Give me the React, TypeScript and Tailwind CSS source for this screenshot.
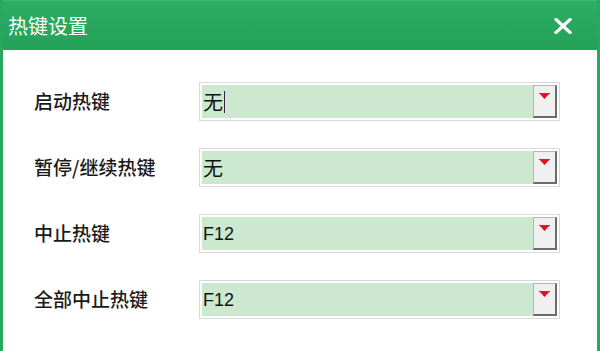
import React from "react";

const rows = [
  { label: "启动热键", value: "无", caret: true },
  { label: "暂停/继续热键", value: "无" },
  { label: "中止热键", value: "F12" },
  { label: "全部中止热键", value: "F12" },
];

function HotkeySelect({ value, caret }: { value: string; caret?: boolean }) {
  const latin = /^[A-Za-z0-9]+$/.test(value);
  return (
    <div className="w-[361px] h-[39px] border border-[#d9d9d9] bg-white p-[2px] flex">
      <div className="flex-1 bg-[#cce8cf] flex items-center pl-[1px]">
        <span
          className={
            latin
              ? "text-[18px] text-[#111] font-['Liberation_Sans',sans-serif] leading-none"
              : "text-[20px] text-[#111] font-['Noto_Sans_CJK_SC',sans-serif] leading-none"
          }
        >
          {value}
        </span>
        {caret && <span className="ml-[1px] w-[1px] h-[22px] bg-[#3a1f4a]" />}
      </div>
      <div className="w-[24px] h-full bg-[#f0f0f0] border border-[#b5b5b5] border-r-[2px] border-b-[2px] border-r-[#6b6b6b] border-b-[#6b6b6b] flex justify-center pt-[7px]">
        <svg width="11" height="6" viewBox="0 0 11 6">
          <polygon points="0,0 11,0 5.5,6" fill="#e0101e" />
          <rect x="0" y="0" width="11" height="1" fill="#b0304a" />
        </svg>
      </div>
    </div>
  );
}

export default function App() {
  return (
    <div className="w-[600px] h-[351px] bg-white border-x-[3px] border-[#27a85e] flex flex-col overflow-hidden">
      {/* Title bar */}
      <div className="h-[50px] shrink-0 -mx-[3px] bg-gradient-to-b from-[#2bae63] to-[#24a159] border-t border-[#3dbb72] flex items-center justify-between pl-[8px] pr-[28px]">
        <span className="text-white text-[20px] font-['Noto_Sans_CJK_SC',sans-serif]">热键设置</span>
        <svg width="18" height="16" viewBox="0 0 18 16">
          <path d="M2 1.5 L16 14.5 M16 1.5 L2 14.5" stroke="white" strokeWidth="3.2" strokeLinecap="square" />
        </svg>
      </div>

      {/* Body */}
      <div className="flex flex-col gap-[27px] pt-[32px] pl-[31px]">
        {rows.map((r) => (
          <div key={r.label} className="flex items-center">
            <span className="w-[165px] text-[19px] font-medium text-[#1a1a1a] font-['Noto_Sans_CJK_SC',sans-serif]">
              {r.label}
            </span>
            <HotkeySelect value={r.value} caret={r.caret} />
          </div>
        ))}
      </div>
    </div>
  );
}
